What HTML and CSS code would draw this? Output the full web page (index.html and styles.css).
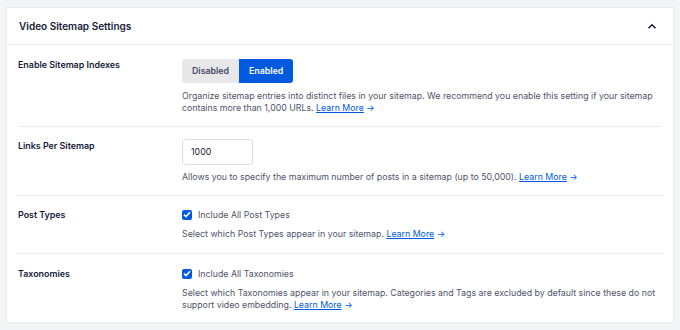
FILE: index.html
```html
<!DOCTYPE html>
<html>
<head>
<meta charset="utf-8">
<link rel="stylesheet" href="styles.css">
</head>
<body>
<div class="card">
  <div class="card-header">
    <div class="card-title">Video Sitemap Settings</div>
    <svg class="chevron" width="10" height="7" viewBox="0 0 10 7"><path d="M1.5 5.2 L5 1.7 L8.5 5.2" fill="none" stroke="#141b38" stroke-width="1.5"/></svg>
  </div>
  <div class="card-body">
    <div class="row row-first">
      <div class="label">Enable Sitemap Indexes</div>
      <div class="control">
        <div class="toggle">
          <span class="opt">Disabled</span><span class="opt opt-active">Enabled</span>
        </div>
        <p class="desc desc-first">Organize sitemap entries into distinct files in your sitemap. We recommend you enable this setting if your sitemap contains more than 1,000 URLs. <a class="link" href="#">Learn More</a> <span class="arrow">→</span></p>
      </div>
    </div>
    <div class="row">
      <div class="label">Links Per Sitemap</div>
      <div class="control">
        <div class="input">1000</div>
        <p class="desc">Allows you to specify the maximum number of posts in a sitemap (up to 50,000). <a class="link" href="#">Learn More</a> <span class="arrow">→</span></p>
      </div>
    </div>
    <div class="row row-check">
      <div class="label">Post Types</div>
      <div class="control">
        <label class="check"><span class="box"><svg width="8" height="7" viewBox="0 0 8 7"><path d="M1 3.6 L3 5.5 L7 1.2" fill="none" stroke="#fff" stroke-width="1.6"/></svg></span>Include All Post Types</label>
        <p class="desc">Select which Post Types appear in your sitemap. <a class="link" href="#">Learn More</a> <span class="arrow">→</span></p>
      </div>
    </div>
    <div class="row row-check row-last">
      <div class="label">Taxonomies</div>
      <div class="control">
        <label class="check"><span class="box"><svg width="8" height="7" viewBox="0 0 8 7"><path d="M1 3.6 L3 5.5 L7 1.2" fill="none" stroke="#fff" stroke-width="1.6"/></svg></span>Include All Taxonomies</label>
        <p class="desc">Select which Taxonomies appear in your sitemap. Categories and Tags are excluded by default since these do not support video embedding. <a class="link" href="#">Learn More</a> <span class="arrow">→</span></p>
      </div>
    </div>
  </div>
</div>
</body>
</html>
```
FILE: styles.css
```css
html, body {
  margin: 0;
  padding: 0;
  background: #f3f4f5;
}
body {
  padding: 7px 6px 0 6px;
  font-family: Inter, "Noto Sans", sans-serif;
  color: #141b38;
}
.card {
  background: #fff;
  border: 1px solid #ececef;
  height: 316px;
  box-sizing: border-box;
}
.card-header {
  height: 36px;
  display: flex;
  align-items: center;
  justify-content: space-between;
  padding: 0 16px 0 12px;
  border-bottom: 1px solid #ececef;
}
.card-title {
  font-size: 10px;
  font-weight: 600;
}
.chevron {
  display: block;
}
.card-body {
  padding: 0 11px 0 11px;
}
.row {
  display: flex;
  padding: 12px 0 12px 0;
  border-top: 1px solid #ececef;
}
.row-first {
  border-top: none;
  padding-top: 13px;
  padding-bottom: 12px;
}
.row-check {
  padding-bottom: 13px;
}
.row-last {
  padding-top: 13px;
}
.label {
  width: 164px;
  flex: none;
  font-size: 8.9px;
  font-weight: 600;
  line-height: 14px;
}
.control {
  flex: 1;
}
.toggle {
  display: inline-flex;
  height: 24px;
  border-radius: 3px;
  overflow: hidden;
}
.opt {
  display: flex;
  align-items: center;
  font-size: 8.8px;
  font-weight: 600;
  background: #e8e8eb;
  color: #434960;
  padding: 0 10px;
}
.opt-active {
  background: #005ae0;
  color: #fff;
  padding: 0 10px;
}
.desc {
  margin: 6px 0 0 0;
  font-size: 8.8px;
  line-height: 12px;
  color: #4f5468;
}
.desc-first {
  margin-top: 7px;
}
.link {
  color: #005ae0;
  text-decoration: underline;
  text-underline-offset: 1px;
}
.arrow {
  color: #005ae0;
}
.input {
  width: 71px;
  height: 26px;
  box-sizing: border-box;
  border: 1px solid #dcdde1;
  border-radius: 3px;
  font-size: 8.8px;
  display: flex;
  align-items: center;
  padding-left: 8px;
  color: #141b38;
}
.check {
  display: flex;
  align-items: center;
  font-size: 8.8px;
  line-height: 14px;
  color: #4f5468;
}
.box {
  width: 10px;
  height: 10px;
  border-radius: 2px;
  background: #005ae0;
  display: inline-flex;
  align-items: center;
  justify-content: center;
  margin-right: 6px;
}
.box svg {
  display: block;
}
```
